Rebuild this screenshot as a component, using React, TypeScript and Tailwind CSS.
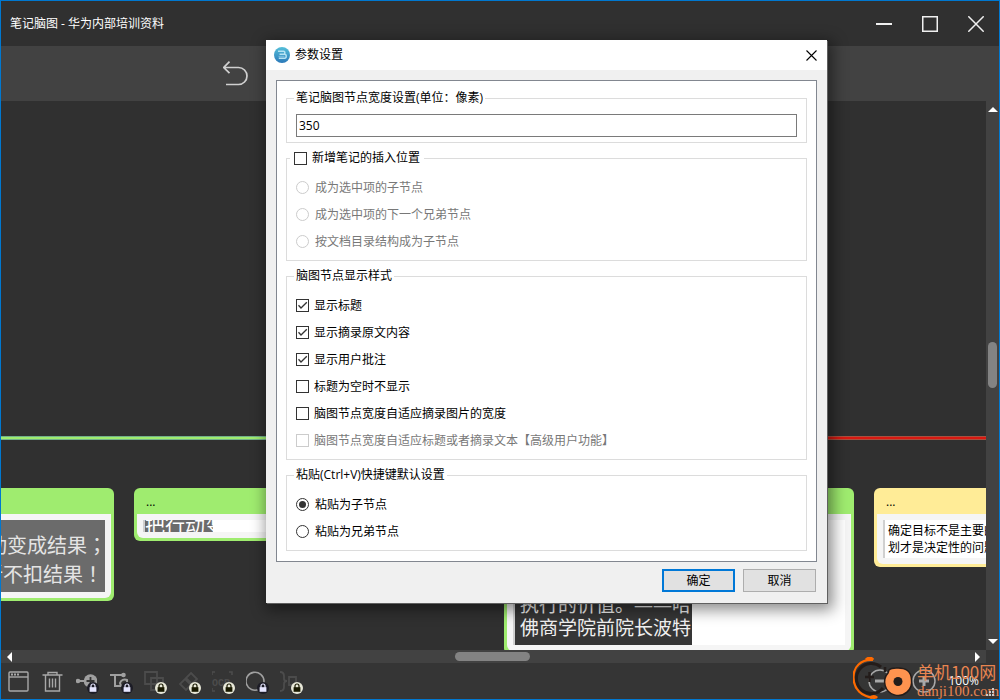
import React, { useState } from 'react';

const WINDOW_BUTTON = 'flex h-full w-[46px] items-center justify-center text-[#f0f0f0]';

const styleOptions = [
    { label: '显示标题', checked: true },
    { label: '显示摘录原文内容', checked: true },
    { label: '显示用户批注', checked: true },
    { label: '标题为空时不显示', checked: false },
    { label: '脑图节点宽度自适应摘录图片的宽度', checked: false },
    { label: '脑图节点宽度自适应标题或者摘录文本【高级用户功能】', checked: false, disabled: true }
];

const insertOptions = ['成为选中项的子节点', '成为选中项的下一个兄弟节点', '按文档目录结构成为子节点'];
const pasteOptions = ['粘贴为子节点', '粘贴为兄弟节点'];

type CheckProps = {
    label: string;
    checked: boolean;
    disabled?: boolean;
    onChange: (checked: boolean) => void;
};

const Check = ({ label, checked, disabled, onChange }: CheckProps) => (
    <label className={`flex items-center gap-[5px] ${disabled ? 'text-[#787878]' : 'text-black'}`}>
        <span className="relative flex h-[13px] w-[13px]">
            <input
                type="checkbox"
                checked={checked}
                disabled={disabled}
                onChange={(e) => onChange(e.target.checked)}
                className="h-[13px] w-[13px] appearance-none border border-[#333333] bg-white disabled:border-[#cccccc]"
            />
            {checked && (
                <svg viewBox="0 0 13 13" className="pointer-events-none absolute inset-0 h-[13px] w-[13px]" fill="none" stroke="#333" strokeWidth="1.3">
                    <path d="M2.5 6.3 5 9l5.8-5.8" />
                </svg>
            )}
        </span>
        {label}
    </label>
);

type RadioProps = {
    name: string;
    label: string;
    checked: boolean;
    disabled?: boolean;
    onChange: () => void;
};

const Radio = ({ name, label, checked, disabled, onChange }: RadioProps) => (
    <label className={`flex h-[27px] items-center gap-1.5 ${disabled ? 'text-[#787878]' : 'text-black'}`}>
        <span className="relative flex h-[13px] w-[13px] items-center justify-center">
            <input
                type="radio"
                name={name}
                checked={checked}
                disabled={disabled}
                onChange={onChange}
                className="h-[13px] w-[13px] appearance-none rounded-full border border-[#333333] bg-white disabled:border-[#cccccc]"
            />
            {checked && <span className="pointer-events-none absolute inset-[3px] rounded-full bg-[#333333]" />}
        </span>
        {label}
    </label>
);

const GROUP = 'min-w-0 border border-[#dcdcdc] px-[9px] pb-[5px]';
const LEGEND = '-ml-0.5 px-0.5 leading-4';

const SettingsDialog = () => {
    const [width, setWidth] = useState('350');
    const [insertEnabled, setInsertEnabled] = useState(false);
    const [insertAs, setInsertAs] = useState('');
    const [styles, setStyles] = useState(styleOptions);
    const [paste, setPaste] = useState(pasteOptions[0]);

    return (
        <div
            role="dialog"
            aria-labelledby="dialog-title"
            className="absolute left-[265px] top-[39px] flex w-[561px] flex-col bg-[#f0f0f0] text-xs leading-4 text-black shadow-[1px_1px_0_#606060,3px_4px_14px_3px_rgba(0,0,0,0.45)]"
        >
            <div className="flex h-[30px] items-center bg-white pl-2">
                <svg viewBox="0 0 16 16" className="mr-[5px] h-4 w-4">
                    <defs>
                        <linearGradient id="logo" x1="0" y1="0" x2="0" y2="1">
                            <stop offset="0" stopColor="#55bfd9" />
                            <stop offset="1" stopColor="#2b79b9" />
                        </linearGradient>
                    </defs>
                    <circle cx="8" cy="8" r="8" fill="url(#logo)" />
                    <path d="M4 4.3h5.6c1.7 0 1.7 3 0 3H5.5h5.2c2 0 2 4 0 4H4.8" fill="none" stroke="#b5e3f3" strokeWidth="1.5" />
                    <path d="M4.5 9.3h6" stroke="#8fcbe8" strokeWidth=".8" />
                </svg>
                <h2 id="dialog-title">参数设置</h2>
                <button aria-label="关闭" className="ml-auto flex h-full w-[31px] items-center justify-center">
                    <svg viewBox="0 0 11 11" className="h-[11px] w-[11px]" stroke="#000" strokeWidth="1.1">
                        <path d="M.5.5l10 10M10.5.5l-10 10" />
                    </svg>
                </button>
            </div>

            <div className="mx-2.5 mt-2.5 flex flex-col gap-[7px] border border-[#828790] bg-white px-[9px] pb-2.5 pt-[9px]">
                <fieldset className={GROUP}>
                    <legend className={LEGEND}>
                        <label htmlFor="node-width">笔记脑图节点宽度设置(单位：像素)</label>
                    </legend>
                    <input
                        id="node-width"
                        type="text"
                        value={width}
                        onChange={(e) => setWidth(e.target.value)}
                        className="mt-2 block h-[23px] w-full border border-[#7a7a7a] px-0.5 outline-none"
                    />
                </fieldset>

                <fieldset className={GROUP}>
                    <legend className="-ml-1.5 px-1 leading-4">
                        <Check label="新增笔记的插入位置" checked={insertEnabled} onChange={setInsertEnabled} />
                    </legend>
                    <div className="mt-2">
                        {insertOptions.map((label) => (
                            <Radio
                                key={label}
                                name="insert"
                                label={label}
                                checked={insertAs === label}
                                disabled={!insertEnabled}
                                onChange={() => setInsertAs(label)}
                            />
                        ))}
                    </div>
                </fieldset>

                <fieldset className={GROUP}>
                    <legend className={LEGEND}>脑图节点显示样式</legend>
                    <div className="mt-2">
                        {styles.map((option, index) => (
                            <div key={option.label} className="flex h-[27px] items-center">
                                <Check
                                    {...option}
                                    onChange={(checked) => setStyles(styles.map((s, i) => (i === index ? { ...s, checked } : s)))}
                                />
                            </div>
                        ))}
                    </div>
                </fieldset>

                <fieldset className={GROUP}>
                    <legend className={LEGEND}>粘贴(Ctrl+V)快捷键默认设置</legend>
                    <div className="mt-2">
                        {pasteOptions.map((label) => (
                            <Radio key={label} name="paste" label={label} checked={paste === label} onChange={() => setPaste(label)} />
                        ))}
                    </div>
                </fieldset>
            </div>

            <div className="flex justify-end gap-2 px-[11px] pb-[11px] pt-[7px]">
                <button className="h-[23px] w-[73px] border-2 border-[#0078d7] bg-[#e1e1e1]">确定</button>
                <button className="h-[23px] w-[73px] border border-[#adadad] bg-[#e1e1e1]">取消</button>
            </div>
        </div>
    );
};

// Nodes sit at free positions on the mind map canvas
const Canvas = () => (
    <main className="relative min-w-0 flex-1 overflow-hidden bg-[#303030]">
        <div className="absolute left-0 top-[335px] h-1 w-[500px] border-y border-[#72b08a] bg-[#9fec6f]" />
        <div className="absolute left-[500px] right-0 top-[335px] h-1 border-y border-[#a85040] bg-[#d81810]" />

        <div className="absolute left-[-237px] top-[387px] w-[350px] rounded-md bg-[#9fec6f] px-[3px] pb-[3px] pt-[26px]">
            <div className="rounded-b-md bg-[#f5f5f5] p-1.5">
                <div className="h-[72px] overflow-hidden bg-[#6b6b6b] pt-2.5 text-right font-['Noto_Sans_CJK_TC',sans-serif] text-xl leading-[29px] text-[#e4e4e4]">
                    <p className="-mr-0.5">把行动变成结果；</p>
                    <p className="pr-0.5">不折不扣结果！</p>
                </div>
            </div>
        </div>

        <div className="absolute left-[133px] top-[387px] w-[350px] rounded-md bg-[#9fec6f] px-[3px] pb-[3px]">
            <h3 className="h-[26px] px-[9px] pt-1.5 text-xs leading-4 text-black">...</h3>
            <div className="rounded-b-md bg-[#f5f5f5] p-1.5">
                <div className="flex h-3 items-center overflow-hidden border-l-2 border-[#d0d0d0] bg-white">
                    <span className="w-[68px] overflow-hidden whitespace-nowrap bg-[#6b6b6b] text-xl leading-5 text-white">把行动变</span>
                </div>
            </div>
        </div>

        <div className="absolute left-[503px] top-[387px] w-[350px] rounded-md bg-[#9fec6f] px-[3px] pb-[3px] pt-[26px]">
            <div className="rounded-b-md bg-[#f5f5f5] p-1.5">
                <div className="flex h-[125px] border-l-2 border-[#d0d0d0] bg-white">
                    <div className="flex w-[177px] flex-col justify-end whitespace-nowrap bg-[#363636] pb-[5px] pl-[5px] text-[19px] leading-[23px] text-[#f0f0f0]">
                        <p>执行的价值。——哈</p>
                        <p>佛商学院前院长波特</p>
                    </div>
                </div>
            </div>
        </div>

        <div className="absolute left-[873px] top-[387px] w-[350px] rounded-md bg-[#ffec97] px-[3px] pb-[3px]">
            <h3 className="h-[26px] px-[9px] pt-1.5 text-xs leading-4 text-black">...</h3>
            <div className="rounded-b-md bg-[#f5f5f5] p-1.5">
                <div className="whitespace-nowrap border-l-2 border-[#d0d0d0] bg-white px-[3px] py-0.5 text-xs leading-[17px] text-black">
                    <p>确定目标不是主要的问题，</p>
                    <p>划才是决定性的问题。</p>
                </div>
            </div>
        </div>
    </main>
);

const Lock = ({ dark }: { dark?: boolean }) => (
    <svg viewBox="0 0 12 12" className="absolute -bottom-0.5 -right-0.5 h-3 w-3">
        <circle cx="6" cy="6" r="6" fill={dark ? '#e8e8d8' : '#1c1c26'} />
        <path d="M4 6V4a2 2 0 0 1 4 0v2" fill="none" stroke={dark ? '#181800' : '#e6e6ff'} strokeWidth="1.2" />
        <path d="M2.6 5.2h6.800v4.600H2.600z" fill={dark ? '#181800' : '#e6e6ff'} />
    </svg>
);

const tools = [
    {
        label: '窗口',
        lock: '',
        color: 'text-[#a8a8a8]',
        icon: (
            <>
                <rect x="1" y="1" width="19" height="19" rx="1" />
                <path d="M1 6h19" />
                <path d="M3 3.5h2M6 3.5h2M9 3.5h2" strokeWidth="1.8" />
            </>
        )
    },
    {
        label: '删除',
        lock: '',
        color: 'text-[#a8a8a8]',
        icon: <path d="M.5 4h20M6 4V1.5h9V4M3.5 4v16h14V4M7.5 7.5v9M10.5 7.5v9M13.5 7.5v9" />
    },
    {
        label: '添加节点',
        lock: 'light',
        color: 'text-[#a0a0a0]',
        icon: (
            <>
                <circle cx="2" cy="10" r="2.3" fill="currentColor" stroke="none" />
                <path d="M3 10h8" strokeWidth="2" />
                <circle cx="14.5" cy="10" r="6.8" fill="currentColor" stroke="none" />
                <path d="M14.5 6v8M10.5 10h8" stroke="#353535" strokeWidth="1.8" />
            </>
        )
    },
    {
        label: '子节点',
        lock: 'light',
        color: 'text-[#a0a0a0]',
        icon: (
            <>
                <path d="M0 4h13M5 4v11h5M10 12a5 5 0 0 1 7-3v6h-6z" strokeWidth="2" />
                <circle cx="13.5" cy="4" r="2.3" fill="currentColor" stroke="none" />
            </>
        )
    },
    { label: '合并', lock: 'dark', color: 'text-[#4c4c4c]', icon: <path d="M1 1h12v12H1zM7 7h12v12H7z" strokeWidth="1.8" /> },
    { label: '链接', lock: 'dark', color: 'text-[#4c4c4c]', icon: <path d="m13 2 6 6-5 5-6-6zM7 8l6 6-5 5-6-6z" strokeWidth="1.8" /> },
    {
        label: '文字识别',
        lock: 'dark',
        color: 'text-[#4c4c4c]',
        icon: (
            <>
                <path d="M0 4V1h3M17 1h3v3M0 17v3h3" strokeWidth="1.6" />
                <text x="0" y="15" fontSize="10" fontFamily="Liberation Mono, monospace" fontWeight="700" fill="currentColor" stroke="none">OCR</text>
            </>
        )
    },
    { label: '搜索', lock: 'light', color: 'text-[#a0a0a0]', icon: <path d="M13 18.3a9 9 0 1 1 5-8.300q0 2-.7 3.500M12 18.500l5 .5" strokeWidth="1.6" /> },
    { label: '概要', lock: 'dark', color: 'text-[#4c4c4c]', icon: <path d="M0 1q4 0 4 4v3q0 2 3 2-3 0-3 3v3q0 4-4 4M9 6h7v8H9z" strokeWidth="1.8" /> }
];

const App = () => (
    <div className="relative flex h-screen flex-col overflow-hidden border border-[#0078d0] bg-[#353535] font-['Open_Sans','Noto_Sans_CJK_SC',sans-serif]">
        <header className="flex h-[45px] shrink-0 items-center bg-[#303030] pl-[9px]">
            <h1 className="text-xs leading-4 text-white">笔记脑图 - 华为内部培训资料</h1>
            <div className="ml-auto flex h-full">
                <button aria-label="最小化" className={WINDOW_BUTTON}>
                    <svg viewBox="0 0 16 16" className="h-4 w-4"><path d="M0 8h16" stroke="currentColor" strokeWidth="2" /></svg>
                </button>
                <button aria-label="最大化" className={WINDOW_BUTTON}>
                    <svg viewBox="0 0 16 16" className="h-4 w-4"><path d="M.75.75h14.5v14.5H.75z" fill="none" stroke="currentColor" strokeWidth="1.5" /></svg>
                </button>
                <button aria-label="关闭窗口" className={WINDOW_BUTTON}>
                    <svg viewBox="0 0 16 16" className="h-4 w-4"><path d="M.3.3l15.4 15.4M15.7.3.3 15.7" stroke="currentColor" strokeWidth="1.5" /></svg>
                </button>
            </div>
        </header>

        <div className="flex h-[55px] shrink-0 items-center bg-[#424242] pl-[222px]">
            <button aria-label="撤销">
                <svg viewBox="0 0 25 25" className="h-[25px] w-[25px]" fill="none" stroke="#d0d0d0" strokeWidth="1.7">
                    <path d="M6.5.7.8 6.5l5.7 5.7M1 6.5h14.5a8.5 8.5 0 0 1 0 17H3" />
                </svg>
            </button>
        </div>

        <div className="flex min-h-0 flex-1">
            <Canvas />
            <div className="flex w-[13px] shrink-0 flex-col items-center bg-[#424242] py-1.5">
                <svg viewBox="0 0 10 5" className="h-[5px] w-2.5"><path d="M5 0l5 5H0z" fill="#fff" /></svg>
                <div className="mt-[230px] h-[46px] w-[9px] rounded-full bg-[#838383]" />
                <svg viewBox="0 0 10 5" className="mt-auto h-[5px] w-2.5"><path d="M0 0h10L5 5z" fill="#fff" /></svg>
            </div>
        </div>

        <div className="mr-[13px] flex h-[13px] shrink-0 items-center bg-[#424242] px-1.5">
            <svg viewBox="0 0 5 10" className="h-2.5 w-[5px]"><path d="M5 0v10L0 5z" fill="#fff" /></svg>
            <div className="ml-[443px] h-[9px] w-[75px] rounded-full bg-[#838383]" />
            <svg viewBox="0 0 5 10" className="ml-auto h-2.5 w-[5px]"><path d="M0 0v10l5-5z" fill="#fff" /></svg>
        </div>

        <footer className="flex h-9 shrink-0 items-center pl-[7px]">
            <div className="flex gap-[13px]">
                {tools.map(({ label, lock, color, icon }) => (
                    <button key={label} aria-label={label} className={`relative h-[21px] w-[21px] ${color}`}>
                        <svg viewBox="0 0 21 21" className="h-[21px] w-[21px]" fill="none" stroke="currentColor" strokeWidth="1.4">{icon}</svg>
                        {lock && <Lock dark={lock === 'dark'} />}
                    </button>
                ))}
            </div>
            <div className="ml-auto flex items-center pr-5">
                <button aria-label="缩小" className="mr-5">
                    <svg viewBox="0 0 24 24" className="h-6 w-6" fill="none" stroke="#a8a8a8" strokeWidth="1.5">
                        <circle cx="12" cy="12" r="11" />
                        <path d="M7 12h10" strokeWidth="3" />
                    </svg>
                </button>
                <button aria-label="放大" className="mr-3">
                    <svg viewBox="0 0 24 24" className="h-6 w-6" fill="none" stroke="#a8a8a8" strokeWidth="1.5">
                        <circle cx="12" cy="12" r="11" />
                        <path d="M7 12h10M12 7v10" strokeWidth="3" />
                    </svg>
                </button>
                <span className="text-xs leading-4 text-white">100%</span>
            </div>
        </footer>

        {/* Site badge over the status bar */}
        <div className="pointer-events-none absolute bottom-0 right-0 flex items-end text-[#e88450]">
            <svg viewBox="0 0 64 42" className="h-[42px] w-16" fill="none">
                <path d="M30 31A15 15 0 1 1 28 10" stroke="#231c1a" strokeWidth="3" />
                <path d="M20 3C8 2 0 10 .5 21S8 40 22 41" stroke="#ff6a00" strokeWidth="2.2" />
                <path d="M13 3q4-4 7 0M17 41q4-3 7 0" stroke="#ff6a00" strokeWidth="3" />
                <path d="M12 20h9M16.5 15v10M32 10v5" stroke="#231c1a" strokeWidth="2.5" />
                <path d="M36 13q2-2 7-2 15-1 15.500 12A13.500 13.500 0 1 1 35 16z" fill="#ff934f" stroke="#231c1a" strokeWidth="1.5" />
                <circle cx="45" cy="24.500" r="4.500" fill="#231c1a" />
            </svg>
            <div className="w-[82px] whitespace-nowrap font-['Noto_Sans_CJK_SC',sans-serif]">
                <p className="text-[17px] leading-[22px]">单机100网</p>
                <p className="font-['Liberation_Serif',serif] text-[15px] leading-4">danji100.com</p>
            </div>
        </div>
        <svg viewBox="0 0 9 9" className="absolute bottom-0.5 right-1 h-[9px] w-[9px]" fill="#c8c8c8">
            <path d="M6 0h2v2H6zM3 3h2v2H3zM6 3h2v2H6zM0 6h2v2H0zM3 6h2v2H3zM6 6h2v2H6z" />
        </svg>

        <SettingsDialog />
    </div>
);

export default App;
